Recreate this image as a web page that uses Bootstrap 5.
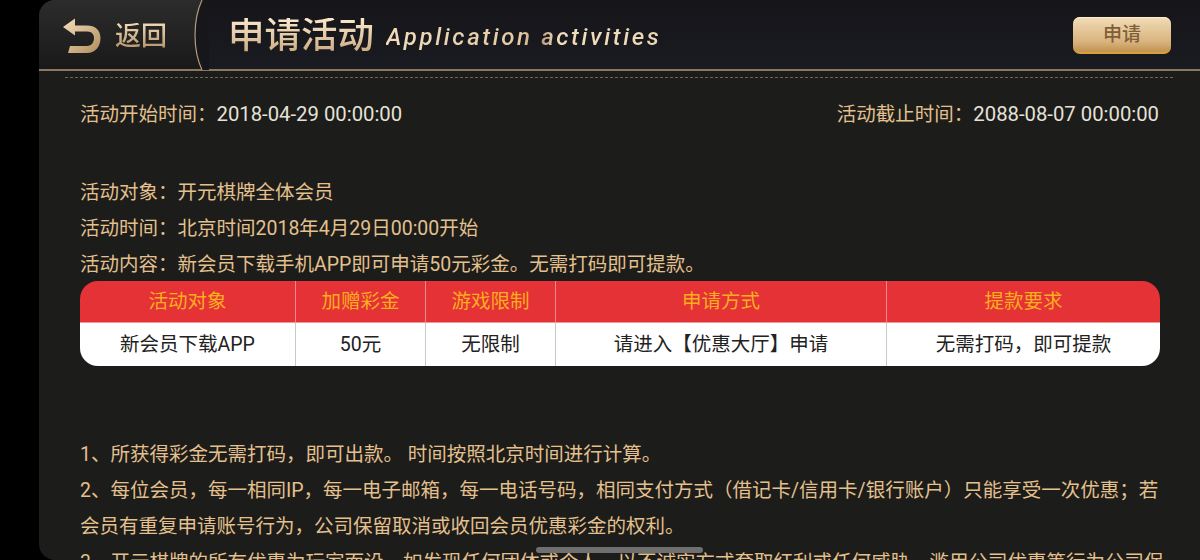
<!DOCTYPE html>
<html lang="zh-CN">
<head>
<meta charset="utf-8">
<title>申请活动</title>
<link rel="stylesheet" href="https://cdn.jsdelivr.net/npm/bootstrap@5.3.0/dist/css/bootstrap.min.css">
<style>
html,body{height:560px;overflow:hidden;background:#000;}
body{font-family:Roboto,"Noto Sans CJK SC",sans-serif;font-size:19.5px;color:#e3c08e;}
.app-shell{margin-left:39px;height:560px;overflow:hidden;background:#1c1c1a;border-radius:16px 0 0 16px;position:relative;}
.top-bar{height:71px;background:linear-gradient(#15151a,#1a1b20);border-bottom:2px solid #8b7762;position:relative;}
.back-area{width:165px;background:linear-gradient(#2c2c2c,#191919);position:relative;padding-left:23px;}
.back-curve{position:absolute;left:150px;top:0;width:20px;height:70px;}
.back-icon{margin-top:2px;}
.back-label{font-size:26px;font-weight:500;line-height:1;margin:3px 0 0 13px;color:#cfae86;background:linear-gradient(#f0d9b5,#b5946c);-webkit-background-clip:text;background-clip:text;-webkit-text-fill-color:transparent;}
.title-area{padding-left:24px;}
.title-cn{font-size:36.5px;font-weight:500;line-height:1;margin-top:4px;background:linear-gradient(#fbe9cd,#c9a77b);-webkit-background-clip:text;background-clip:text;-webkit-text-fill-color:transparent;}
.title-en{font-family:Roboto,sans-serif;font-weight:500;font-style:italic;font-size:24px;letter-spacing:2.62px;margin:5px 0 0 12px;line-height:1.1;background:linear-gradient(90deg,#f1dcbc 0,#e4c9a2 50%,#a98c68 55%,#f1dcbc 62%,#ecd7b5 100%);-webkit-background-clip:text;background-clip:text;-webkit-text-fill-color:transparent;}
.apply-btn{width:98px;height:37px;margin-right:29px;margin-top:2px;padding:0;border:0;border-radius:7px;font-size:19px;font-weight:500;line-height:36px;color:#7e5f38;background:linear-gradient(#f2dcb6,#d9b47f 70%,#c2914f);border-bottom:2px solid #d89f3c;box-shadow:inset 0 1px 0 #fbeed3;}
.dash-rule{margin:6px 27px 0 26px;border-top:1px dashed #6b675f;height:0;}
.body-area{padding:18px 41px 0 41px;line-height:36px;white-space:nowrap;}
.time-val{color:#e6e2d8;font-size:20.3px;}
.info-block{margin-top:42px;}
.promo-table{width:1080px;margin:-2px 0 0 0;table-layout:fixed;border-collapse:separate;border-spacing:0;border-radius:18px;overflow:hidden;text-align:center;font-size:19.5px;}
.promo-table th,.promo-table td{padding:0;vertical-align:middle;border-right:1px solid #c9c9c9;}
.promo-table th:last-child,.promo-table td:last-child{border-right:0;}
.promo-table th{height:42px;background:#e53236;color:#fbae1c;font-weight:400;border-right-color:#ee8a8a;border-bottom:1px solid #ee9a9a;}
.promo-table td{height:43px;padding-top:1px;background:#fff;color:#222;}
.rule-block{margin-top:71px;white-space:normal;width:1080px;line-height:36px;}
.rule-last{white-space:nowrap;}
.scroll-thumb{position:absolute;left:497px;top:547px;width:167px;height:6px;border-radius:3px;background:#6f6f70;}
</style>
</head>
<body>
<div class="app-shell">
  <header class="top-bar d-flex align-items-stretch">
    <div class="back-area d-flex align-items-center">
      <svg class="back-icon" width="40" height="36" viewBox="0 0 40 36" aria-hidden="true">
        <defs><linearGradient id="g1" x1="0" y1="0" x2="1" y2="1"><stop offset="0" stop-color="#f4dfbd"/><stop offset="1" stop-color="#b08c5c"/></linearGradient></defs>
        <path d="M13 0.500 L1 9 L13 17.500 L13 13.5 L25 13.5 C30.500 13.500 32 17 32 20 C32 25 29 28 25 28 L8 28 L6 35 L25 35 C34 35 38.500 28 38.500 20 C38.500 12 33 7.500 25 7.500 L13 7.500 Z" fill="url(#g1)"/>
      </svg>
      <span class="back-label">返回</span>
      <svg class="back-curve" viewBox="0 0 20 70" aria-hidden="true"><path d="M13 0 C3.700 20 3.700 50 13 70 L20 70 L20 0 Z" fill="#17171b"/><path d="M13 0 C3.700 20 3.700 50 13 70" fill="none" stroke="#b59a7c" stroke-width="1.200"/></svg>
    </div>
    <div class="title-area d-flex align-items-center flex-grow-1">
      <span class="title-cn">申请活动</span>
      <span class="title-en">Application activities</span>
    </div>
    <div class="d-flex align-items-center">
      <button type="button" class="btn apply-btn">申请</button>
    </div>
  </header>
  <div class="dash-rule"></div>
  <main class="body-area">
    <div class="d-flex justify-content-between">
      <div>活动开始时间：<span class="time-val">2018-04-29 00:00:00</span></div>
      <div>活动截止时间：<span class="time-val">2088-08-07 00:00:00</span></div>
    </div>
    <div class="info-block">
      <div>活动对象：开元棋牌全体会员</div>
      <div>活动时间：北京时间2018年4月29日00:00开始</div>
      <div>活动内容：新会员下载手机APP即可申请50元彩金。无需打码即可提款。</div>
    </div>
    <table class="promo-table">
      <colgroup><col style="width:216px"><col style="width:130px"><col style="width:130px"><col style="width:331px"><col style="width:273px"></colgroup>
      <thead><tr><th>活动对象</th><th>加赠彩金</th><th>游戏限制</th><th>申请方式</th><th>提款要求</th></tr></thead>
      <tbody><tr><td>新会员下载APP</td><td>50元</td><td>无限制</td><td>请进入【优惠大厅】申请</td><td>无需打码，即可提款</td></tr></tbody>
    </table>
    <div class="rule-block">
      <div>1、所获得彩金无需打码，即可出款。 时间按照北京时间进行计算。</div>
      <div>2、每位会员，每一相同IP，每一电子邮箱，每一电话号码，相同支付方式（借记卡/信用卡/银行账户）只能享受一次优惠；若会员有重复申请账号行为，公司保留取消或收回会员优惠彩金的权利。</div>
      <div class="rule-last">3、开元棋牌的所有优惠为玩家而设，如发现任何团体或个人，以不诚实方式套取红利或任何威胁、滥用公司优惠等行为公司保</div>
    </div>
  </main>
  <div class="scroll-thumb"></div>
</div>
<script src="https://cdn.jsdelivr.net/npm/bootstrap@5.3.0/dist/js/bootstrap.bundle.min.js"></script>
</body>
</html>
